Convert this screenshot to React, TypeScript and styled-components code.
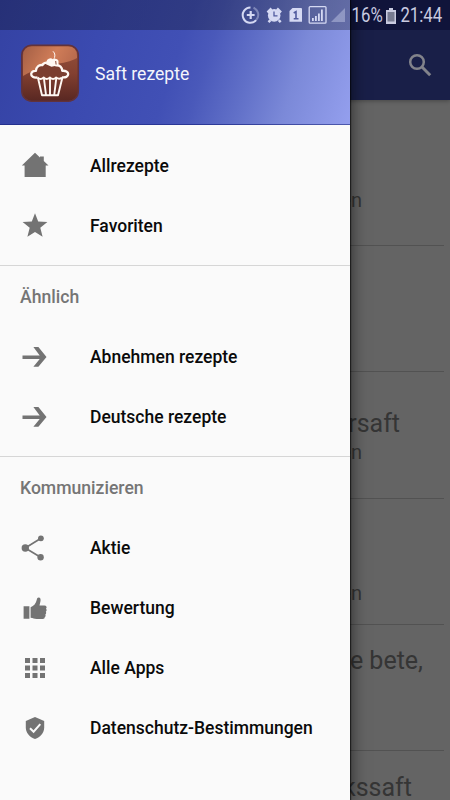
import React from "react";
import styled, { createGlobalStyle } from "styled-components";

const GlobalStyle = createGlobalStyle`
  body { margin: 0; background: #646464; }
  * { box-sizing: border-box; }
`;

const Screen = styled.div`
  position: relative;
  width: 450px;
  height: 800px;
  overflow: hidden;
  background: #646464;
  font-family: Roboto, "Liberation Sans", sans-serif;
`;

const Page = styled.div`
  display: flex;
  flex-direction: column;
  height: 800px;
`;

const Toolbar = styled.header`
  display: flex;
  flex: none;
  align-items: flex-end;
  justify-content: flex-end;
  height: 100px;
  padding: 0 18px 23px 0;
  background: linear-gradient(#10143a 0 30px, #191f48 30px);
  box-shadow: 0 1px 4px rgba(0, 0, 0, 0.3);
`;

const RecipeList = styled.main`
  display: flex;
  flex-direction: column;
  padding: 20px 6px 0;
`;

const RecipeRow = styled.article`
  display: flex;
  flex: none;
  flex-direction: column;
  justify-content: center;
  height: 126.2px;
  padding-top: 4px;
  border-bottom: 1px solid #525252;
  text-align: right;
`;

const RecipeTitle = styled.div<{ $inset: number }>`
  height: 29.5px;
  padding-right: ${(p) => p.$inset}px;
  font-size: 25px;
  line-height: 29.5px;
  color: #353535;
`;

const RecipeMeta = styled.div`
  height: 27px;
  padding-right: 82px;
  font-size: 20px;
  line-height: 29px;
  color: #353535;
`;

const Drawer = styled.aside`
  position: absolute;
  top: 0;
  left: 0;
  display: flex;
  flex-direction: column;
  width: 350px;
  height: 800px;
  background: #fafafa;
  box-shadow: 0 0 16px rgba(0, 0, 0, 0.65), 1px 0 1px rgba(0, 0, 0, 0.55);
`;

const DrawerHeader = styled.div`
  display: flex;
  flex: none;
  align-items: center;
  gap: 15px;
  height: 125px;
  padding: 22px 20px 0;
  border-bottom: 1px solid rgba(20, 30, 120, 0.5);
  background: linear-gradient(108deg, #3442a3 0%, #3b4ab0 28%, #4150b5 50%, #4a59ba 58%, #6170c8 70%, #7b89d8 82%, #949fee 100%);
  color: #f4f5fc;
  font-size: 17.6px;
`;

const HeaderTitle = styled.span`
  padding-top: 1px;
`;

const Section = styled.section`
  display: flex;
  flex: none;
  flex-direction: column;
  border-bottom: 1px solid #d6d6d6;
  &:last-child { border-bottom: 0; }
`;

const MainSection = styled(Section)`
  padding: 10.5px 0 9.5px;
`;

const TitledSection = styled(Section)`
  padding-bottom: 9.2px;
`;

const SectionTitle = styled.h2`
  height: 61px;
  margin: 0;
  padding-left: 20px;
  color: #757575;
  font-size: 17.6px;
  font-weight: 500;
  line-height: 62px;
`;

const MenuItem = styled.div`
  display: flex;
  align-items: center;
  gap: 40px;
  height: 60px;
  padding-left: 20px;
  color: #0a0a0a;
  font-size: 17.5px;
  font-weight: 500;
  line-height: 24px;
  svg { display: block; flex: none; margin-top: -1px; color: #737373; }
`;

const StatusBar = styled.div`
  position: absolute;
  top: 0;
  left: 0;
  display: flex;
  align-items: center;
  justify-content: flex-end;
  width: 450px;
  height: 30px;
  padding-right: 8px;
  background: linear-gradient(90deg, rgba(0, 0, 0, 0.27) 350px, transparent 350px);
  color: #c9cbe0;
  svg { display: block; flex: none; }
`;

const StatusText = styled.span<{ $width: number }>`
  display: flex;
  justify-content: center;
  width: ${(p) => p.$width}px;
  font-size: 19.5px;
  line-height: 30px;
  white-space: nowrap;
  span { transform: scaleX(0.86); padding-top: 2px; }
`;

const StatusIcons = styled.div`
  display: flex;
  align-items: center;
  margin-right: 6px;
  color: #d5d9f3;
`;

const BatterySlot = styled.div`
  margin: 1px 5px 0 3px;
`;

const Icon = ({ children }: { children: React.ReactNode }) => (
  <svg width="30" height="30" viewBox="0 0 30 30" fill="currentColor">{children}</svg>
);

const HomeIcon = () => (
  <Icon><path d="M15 2.7 20 7.4V6.6h3.8v4.5l4.7 4.4h-2.8V27H4.6V15.5H1.8z" /></Icon>
);
const StarIcon = () => (
  <Icon><path d="m15 3.3 3.2 8.2 9.2.5-7.1 5.8 2.3 9-7.6-4.9-7.6 4.9 2.3-9-7.1-5.8 9.2-.5z" /></Icon>
);
const ArrowIcon = () => (
  <Icon><path d="M2.5 13.4h17.2L13.4 5h5L26.5 15l-8.1 9.8h-5l6.3-7.7H2.5z" /></Icon>
);
const ShareIcon = () => (
  <Icon>
    <path d="M21 5.2 5.2 15 20.6 24.3" fill="none" stroke="currentColor" strokeWidth="1.7" />
    <circle cx="5.3" cy="15" r="3.7" />
    <circle cx="20.9" cy="5.3" r="2.9" />
    <circle cx="20.6" cy="24.2" r="3.2" />
  </Icon>
);
const ThumbIcon = () => (
  <Icon>
    <path d="M3.6 13.2h5.8v12.6H3.6zM10.6 14.2c3.2-1 5.5-3.8 6.1-7.1.3-1.8.9-2.6 2-2.6 1.6 0 2.2 1.6 1.8 3.6l-1 4.3h4.8c2.3 0 3 2 1.7 3.3 1 .9.8 2.3-.2 3 .7 1.1.4 2.2-.5 2.8.6 1 .3 2.1-.6 2.7.1 1.1-.7 1.7-1.9 1.7h-6.2c-2.4 0-3.5-.8-6-1.1z" />
  </Icon>
);
const GridIcon = () => (
  <Icon><path d="M5 5h5v5H5zM12.5 5h5v5h-5zM20 5h5v5h-5zM5 12.5h5v5H5zM12.5 12.5h5v5h-5zM20 12.5h5v5h-5zM5 20h5v5H5zM12.5 20h5v5h-5zM20 20h5v5h-5z" /></Icon>
);
const ShieldIcon = () => (
  <Icon>
    <path d="M15 4.1 24.2 8v6.6c0 5.4-3.8 9.7-9.2 11.4-5.4-1.7-9.2-6-9.2-11.4V8z" />
    <path d="m10 15.2 3.6 3.5 6.7-7.6" fill="none" stroke="#fafafa" strokeWidth="2" />
  </Icon>
);

const CupcakeLogo = () => (
  <svg width="60" height="60" viewBox="0 0 60 60">
    <defs>
      <linearGradient id="brown" x1="0" y1="0" x2="0" y2="1">
        <stop offset="0" stopColor="#95513c" />
        <stop offset=".5" stopColor="#834030" />
        <stop offset="1" stopColor="#582722" />
      </linearGradient>
      <linearGradient id="gloss" x1="0" y1="0" x2="1" y2="0.3">
        <stop offset="0" stopColor="#a45f45" />
        <stop offset=".6" stopColor="#d07d58" />
        <stop offset="1" stopColor="#b96b4e" />
      </linearGradient>
    </defs>
    <rect x="1.8" y="2.2" width="56.5" height="56" rx="10" fill="url(#brown)" stroke="#61323c" strokeWidth="1.5" />
    <path d="M3 24V13Q3 3.5 12 3.5H48Q57 3.5 57 13V15C45 22 25 20 3 33z" fill="url(#gloss)" />
    <g fill="none" stroke="#fff8f3" strokeLinejoin="round">
      <path d="M17.5 34.5c-4 .5-6.5-1-6.3-3.6.2-2 2.3-3.4 4.7-3 .3-4 3-6.4 6.5-5.8 1.8-3.4 11.5-3.7 13.5.2 4-.5 6.3 2.2 6.3 5.5 3.3-.4 6 1.1 6 3.3 0 2.6-2.7 3.7-6.3 3.2" fill="#7b3e30" strokeWidth="2.3" />
      <path d="M17.5 34.5q3 3 6.2 0 3 3 6.2 0 3.2 3 6.2 0 3.2 2.5 5.8 0" strokeWidth="1.8" />
      <path d="m18 35 4 17.3h16L42.3 35M24 36l2 16M30 36v16M36.2 36l-2 16" strokeWidth="1.9" />
      <path d="M33.5 17q3-5.5-.5-8.7" strokeWidth="1" />
    </g>
    <path d="M27 17q3-3 6-.8 4-1.5 5.5 1.5v4.5l-7 1.5-5.5-2.5z" fill="#fff8f3" />
    <path d="m35.7 18 .4 3.5" stroke="#8a4936" />
  </svg>
);

const StatusSymbols = () => (
  <svg width="104" height="24" viewBox="241 3 104 24" fill="currentColor">
    <path d="M253.5 7.8a7.5 7.5 0 0 1 2.8 12" fill="none" stroke="currentColor" strokeWidth="2" opacity=".4" />
    <path d="M250.5 7.4a7.7 7.7 0 1 0 5.7 12.8" fill="none" stroke="currentColor" strokeWidth="2" />
    <path d="M246.8 15h7.8m-3.9-3.9v7.8" stroke="currentColor" strokeWidth="2.2" />
    <circle cx="274.2" cy="15.4" r="6.3" />
    <path d="m267.5 12.5 4-4m9.5 4-4-4m-6.5 11.7-2 2m10.2-2 2 2" stroke="currentColor" strokeWidth="2.5" />
    <path d="M274 11.5v4.3h3.5" fill="none" stroke="#505a9e" strokeWidth="1.3" />
    <path d="M292.5 8h8.5q1 0 1 1v12.8h-12.5V11z" />
    <path d="m293.7 13 2.3-1.4v7.2m-2.3 0h4.8" fill="none" stroke="#505a9e" strokeWidth="1.6" />
    <rect x="309.2" y="6.6" width="16.8" height="16.6" rx="1" fill="none" stroke="currentColor" strokeWidth="1.3" />
    <path d="M312 18h1.8v3H312zm3-2h1.8v5H315zm3-2.5h1.8V21H318zm3-4h1.8V21H321z" />
    <path d="M345 8v14h-14z" opacity=".4" />
  </svg>
);

const menu = [
  [{ icon: HomeIcon, label: "Allrezepte" }, { icon: StarIcon, label: "Favoriten" }],
  [{ icon: ArrowIcon, label: "Abnehmen rezepte" }, { icon: ArrowIcon, label: "Deutsche rezepte" }],
  [
    { icon: ShareIcon, label: "Aktie" },
    { icon: ThumbIcon, label: "Bewertung" },
    { icon: GridIcon, label: "Alle Apps" },
    { icon: ShieldIcon, label: "Datenschutz-Bestimmungen" },
  ],
];

const recipes = [
  { lines: [""], inset: 0, meta: "en" },
  { lines: [""], inset: 0, meta: "" },
  { lines: ["rsaft"], inset: 44, meta: "en" },
  { lines: ["", ""], inset: 0, meta: "en" },
  { lines: ["te bete,", ""], inset: 21, meta: "" },
  { lines: ["kssaft", ""], inset: 32, meta: "" },
];

const MenuItems = ({ items }: { items: (typeof menu)[number] }) => (
  <>
    {items.map(({ icon: Glyph, label }) => (
      <MenuItem key={label}><Glyph />{label}</MenuItem>
    ))}
  </>
);

export default function App() {
  return (
    <Screen>
      <GlobalStyle />
      <Page>
        <Toolbar>
          <svg width="24" height="24" viewBox="0 0 24 24" fill="none" stroke="#82838b" strokeWidth="2.5">
            <circle cx="9" cy="9" r="6.8" />
            <path d="m14 14 8.2 8.2" strokeWidth="3" />
          </svg>
        </Toolbar>
        <RecipeList>
          {recipes.map((r, i) => (
            <RecipeRow key={i}>
              {r.lines.map((line, n) => (
                <RecipeTitle key={n} $inset={r.inset}>{line}</RecipeTitle>
              ))}
              <RecipeMeta>{r.meta}</RecipeMeta>
            </RecipeRow>
          ))}
        </RecipeList>
      </Page>
      <Drawer>
        <DrawerHeader><CupcakeLogo /><HeaderTitle>Saft rezepte</HeaderTitle></DrawerHeader>
        <MainSection><MenuItems items={menu[0]} /></MainSection>
        <TitledSection>
          <SectionTitle>Ähnlich</SectionTitle>
          <MenuItems items={menu[1]} />
        </TitledSection>
        <TitledSection>
          <SectionTitle>Kommunizieren</SectionTitle>
          <MenuItems items={menu[2]} />
        </TitledSection>
      </Drawer>
      <StatusBar>
        <StatusIcons><StatusSymbols /></StatusIcons>
        <StatusText $width={32}><span>16%</span></StatusText>
        <BatterySlot>
          <svg width="10" height="16" viewBox="0 0 10 16" fill="#c9cbe0">
            <path d="M3 0h4v2h3v14H0V2h3z" />
            <path d="M1.5 4h7v9.5h-7z" fill="#777b91" />
          </svg>
        </BatterySlot>
        <StatusText $width={41}><span>21:44</span></StatusText>
      </StatusBar>
    </Screen>
  );
}
